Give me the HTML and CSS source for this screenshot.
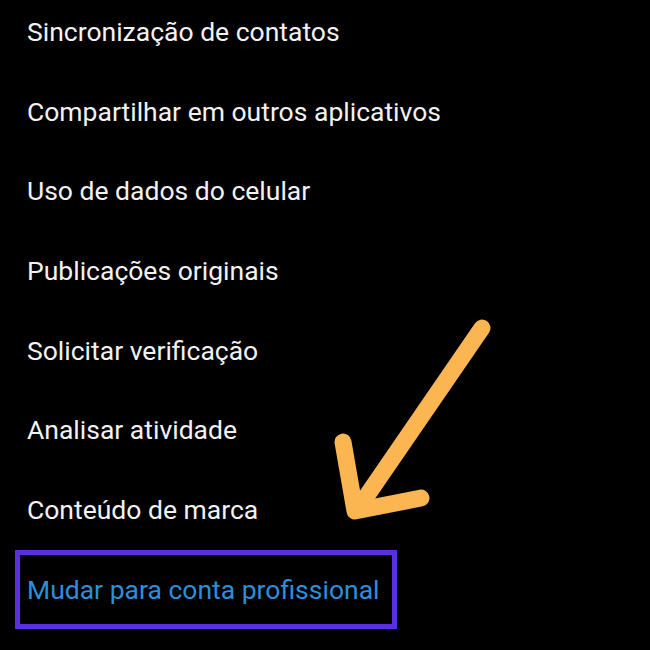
FILE: index.html
```html
<!DOCTYPE html>
<html lang="pt-BR">
<head>
<meta charset="utf-8">
<link rel="stylesheet" href="styles.css">
</head>
<body>
<ul class="menu">
  <li class="item"><span class="label">Sincronização de contatos</span></li>
  <li class="item"><span class="label">Compartilhar em outros aplicativos</span></li>
  <li class="item"><span class="label">Uso de dados do celular</span></li>
  <li class="item"><span class="label">Publicações originais</span></li>
  <li class="item"><span class="label">Solicitar verificação</span></li>
  <li class="item"><span class="label">Analisar atividade</span></li>
  <li class="item"><span class="label">Conteúdo de marca</span></li>
  <li class="item item-pro"><span class="highlight"><span class="label label-pro">Mudar para conta profissional</span></span></li>
</ul>
<svg class="arrow" width="650" height="650" viewBox="0 0 650 650" aria-hidden="true">
  <g fill="none" stroke="#fbb652" stroke-width="17" stroke-linecap="round" stroke-linejoin="round">
    <path d="M482 328 L357 510"/>
    <path d="M343 442 L355 511 L421 498"/>
  </g>
</svg>
</body>
</html>
```
FILE: styles.css
```css
html, body {
  margin: 0;
  padding: 0;
  background: #000;
  width: 650px;
  height: 650px;
  overflow: hidden;
}
body {
  position: relative;
  font-family: Roboto, "Noto Sans", sans-serif;
}
.menu {
  list-style: none;
  margin: -8px 0 0 0;
  padding: 0 0 0 27px;
}
.item {
  height: 79.7px;
  display: flex;
  align-items: center;
}
.label {
  color: #f2f2f2;
  font-size: 26.5px;
  line-height: 30px;
}
.item-pro {
  margin-left: -12px;
}
.highlight {
  display: inline-flex;
  align-items: center;
  height: 79px;
  box-sizing: border-box;
  border: 5px solid #5a2ee3;
  padding: 0 13px 0 7px;
}
.label-pro {
  color: #2c8fdc;
}
.arrow {
  position: absolute;
  left: 0;
  top: 0;
}
```
